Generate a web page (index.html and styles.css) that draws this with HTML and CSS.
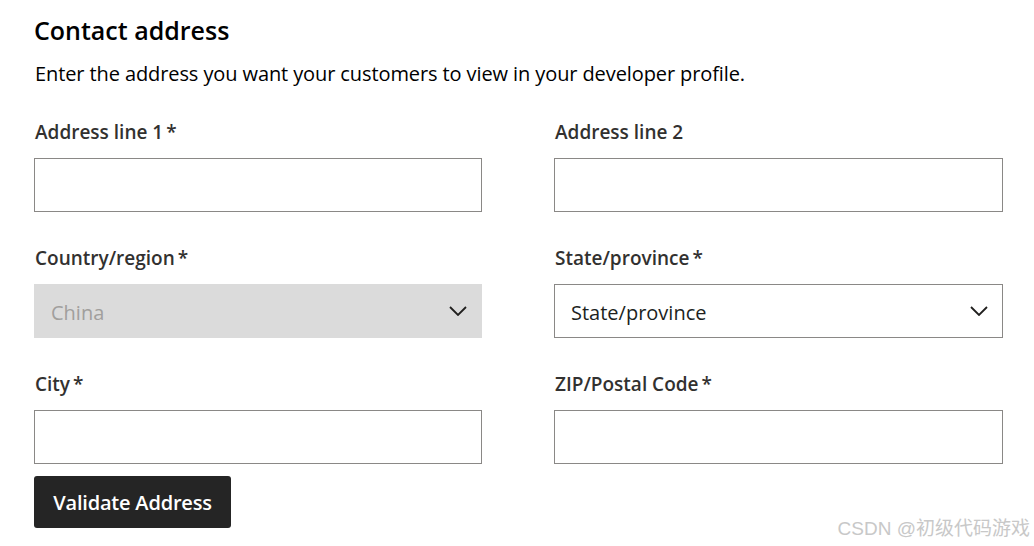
FILE: index.html
```html
<!DOCTYPE html>
<html lang="en">
<head>
<meta charset="utf-8">
<title>Contact address</title>
<link rel="stylesheet" href="styles.css">
</head>
<body>
<main class="page">
  <h1 class="title">Contact address</h1>
  <p class="desc">Enter the address you want your customers to view in your developer profile.</p>
  <div class="grid">
    <div class="field">
      <label class="label">Address line 1<span class="req">*</span></label>
      <div class="input"></div>
    </div>
    <div class="field">
      <label class="label">Address line 2</label>
      <div class="input"></div>
    </div>
    <div class="field">
      <label class="label">Country/region<span class="req">*</span></label>
      <div class="select disabled"><span>China</span>
        <svg class="chev" viewBox="0 0 18 10" width="18" height="10"><path d="M1 1 L9 9 L17 1" fill="none" stroke="#201f1e" stroke-width="1.8"/></svg>
      </div>
    </div>
    <div class="field">
      <label class="label">State/province<span class="req">*</span></label>
      <div class="select"><span>State/province</span>
        <svg class="chev" viewBox="0 0 18 10" width="18" height="10"><path d="M1 1 L9 9 L17 1" fill="none" stroke="#201f1e" stroke-width="1.8"/></svg>
      </div>
    </div>
    <div class="field">
      <label class="label">City<span class="req">*</span></label>
      <div class="input"></div>
    </div>
    <div class="field">
      <label class="label">ZIP/Postal Code<span class="req">*</span></label>
      <div class="input"></div>
    </div>
  </div>
  <button class="btn">Validate Address</button>
</main>
<div class="watermark">CSDN @初级代码游戏</div>
</body>
</html>
```
FILE: styles.css
```css
html, body {
  margin: 0;
  padding: 0;
  background: #fff;
}
body {
  font-family: "Open Sans", "Noto Sans", sans-serif;
  color: #000;
  width: 1034px;
  height: 546px;
  overflow: hidden;
  position: relative;
}
.page {
  padding: 11px 0 0 34px;
  width: 969px;
}
.title {
  margin: 0;
  font-size: 25px;
  font-weight: 600;
  line-height: 38px;
}
.desc {
  margin: 11px 0 0 1px;
  font-size: 20px;
  line-height: 28px;
  letter-spacing: -0.1px;
}
.grid {
  display: grid;
  grid-template-columns: 448px 449px;
  column-gap: 72px;
  row-gap: 32px;
  margin-top: 30px;
}
.field {
  display: flex;
  flex-direction: column;
}
.label {
  font-size: 19px;
  font-weight: 600;
  line-height: 28px;
  color: #323130;
  margin-left: 1px;
  margin-bottom: 12px;
}
.req {
  margin-left: 3px;
}
.input {
  height: 54px;
  box-sizing: border-box;
  border: 1px solid #8a8886;
  background: #fff;
}
.select {
  height: 54px;
  box-sizing: border-box;
  border: 1px solid #8a8886;
  display: flex;
  align-items: center;
  justify-content: space-between;
  padding: 2px 14px 0 16px;
  font-size: 20px;
  color: #201f1e;
}
.select.disabled {
  background: #dbdbdb;
  border-color: #dbdbdb;
  color: #a19f9d;
}
.chev {
  display: block;
  margin-top: -3px;
}
.btn {
  margin-top: 12px;
  width: 197px;
  height: 52px;
  background: #252525;
  color: #fff;
  border: none;
  border-radius: 3px;
  font-family: inherit;
  font-size: 20px;
  font-weight: 600;
  letter-spacing: -0.2px;
  padding: 0;
}
.watermark {
  position: absolute;
  right: 4px;
  bottom: 6px;
  font-family: "Liberation Sans", "Noto Sans CJK SC", sans-serif;
  font-size: 19px;
  color: #c8c8c8;
}
```
